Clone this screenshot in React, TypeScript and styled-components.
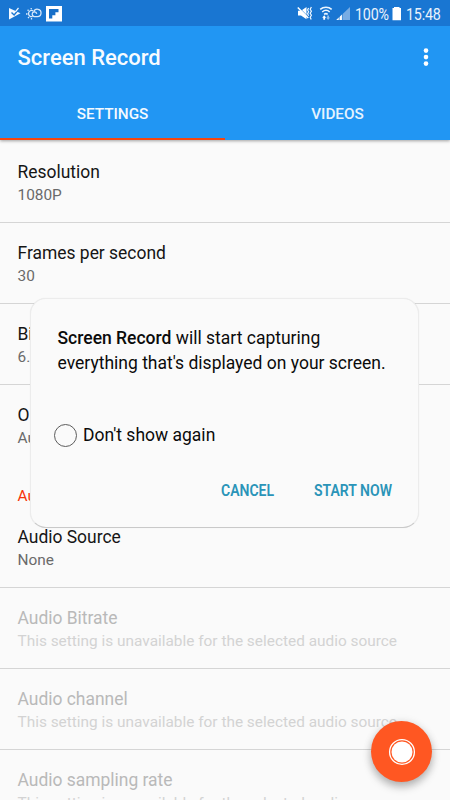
import React from "react";
import styled, { createGlobalStyle } from "styled-components";

const GlobalStyle = createGlobalStyle`
  * { box-sizing: border-box; }
  body {
    margin: 0;
    background: #fafafa;
    font-family: Roboto, "Liberation Sans", sans-serif;
  }
  button { border: 0; padding: 0; background: none; font-family: inherit; }
`;

const Screen = styled.div`
  position: relative;
  width: 450px;
  height: 800px;
  overflow: hidden;
  background: #fafafa;
`;

const Header = styled.header`
  position: relative;
  height: 140px;
  background: #2196f3;
  box-shadow: 0 1px 3px rgba(0, 0, 0, 0.36);
`;

const StatusBar = styled.div`
  display: flex;
  justify-content: space-between;
  height: 26px;
  background: #1976d2;
  color: #e9f2fc;
`;

const StatusGroup = styled.div`
  display: flex;
  align-items: center;
`;

const StatusText = styled.span<{ $width: number }>`
  width: ${(p) => p.$width}px;
  height: 26px;
  font-size: 16.4px;
  line-height: 29px;
  letter-spacing: -0.2px;
  white-space: nowrap;
`;

const Condensed = styled.span<{ $scale: number }>`
  display: inline-block;
  transform: scaleX(${(p) => p.$scale});
  transform-origin: left;
`;

const Toolbar = styled.div`
  display: flex;
  align-items: center;
  justify-content: space-between;
  height: 63px;
  padding: 0 20px 0 17.5px;
`;

const AppTitle = styled.h1`
  margin: 0;
  color: #f7fbff;
  font-size: 22px;
  font-weight: 500;
  line-height: 31px;
`;

const MenuButton = styled.button`
  width: 8px;
  height: 24px;
  display: flex;
`;

const Tabs = styled.nav`
  display: grid;
  grid-template-columns: 1fr 1fr;
  height: 51px;
`;

const Tab = styled.button<{ $active?: boolean }>`
  padding-top: 1px;
  border-bottom: 2px solid ${(p) => (p.$active ? "#f4460f" : "transparent")};
  color: ${(p) => (p.$active ? "#f4faff" : "#e6f3fe")};
  font-size: 15.3px;
  font-weight: 500;
`;

const SettingsList = styled.main`
  padding-top: 1.5px;
`;

const Row = styled.section<{ $disabled?: boolean; $divider?: boolean }>`
  height: 81.2px;
  padding: 19.4px 17.5px 0;
  border-bottom: 1px solid ${(p) => (p.$divider ? "#d5d5d5" : "transparent")};
  color: ${(p) => (p.$disabled ? "#b9b9b9" : "#151515")};
`;

const RowTitle = styled.div`
  font-size: 17.45px;
  line-height: 23px;
  white-space: nowrap;
`;

const RowSummary = styled.div<{ $disabled?: boolean }>`
  color: ${(p) => (p.$disabled ? "#d3d3d3" : "#6a6a6a")};
  font-size: 15.4px;
  line-height: 22px;
  white-space: nowrap;
`;

const Category = styled.div`
  height: 40.2px;
  padding: 19px 17.5px 0;
  color: #f73208;
  font-size: 15.4px;
  line-height: 22px;
`;

const Dialog = styled.div`
  position: absolute;
  top: 298px;
  left: 30px;
  width: 389px;
  height: 230px;
  padding: 27px 26px 0 26.5px;
  border: 1px solid #ececec;
  border-bottom-color: #c9c9c9;
  border-radius: 16px;
  background: #fafafa;
  box-shadow: 0 0 1px rgba(0, 0, 0, 0.1);
  color: #0b0b0b;
`;

const Message = styled.p`
  margin: 0;
  font-size: 17.5px;
  line-height: 25px;
  white-space: nowrap;

  strong { font-weight: 500; }
`;

const Choice = styled.label`
  display: flex;
  align-items: center;
  gap: 6px;
  height: 24px;
  margin: 47px 0 0 -3.5px;
  font-size: 17.5px;
  line-height: 26px;
`;

const Radio = styled.span`
  width: 23px;
  height: 23px;
  border: 1.5px solid #5c5c5c;
  border-radius: 50%;
`;

const Actions = styled.div`
  display: flex;
  gap: 39px;
  margin: 31px 0 0 163.5px;
`;

const Action = styled.button<{ $width: number }>`
  width: ${(p) => p.$width}px;
  height: 24px;
  color: #2a94b8;
  font-size: 16.5px;
  font-weight: 600;
  text-align: left;
  white-space: nowrap;
`;

const RecordButton = styled.button`
  position: absolute;
  left: 371px;
  top: 721px;
  display: grid;
  place-items: center;
  width: 61px;
  height: 61px;
  border-radius: 50%;
  background: #ff5722;
  box-shadow: 0 5px 8px rgba(0, 0, 0, 0.25), 0 1px 10px rgba(0, 0, 0, 0.1);
`;

type Setting = { title: string; summary: string; disabled?: boolean; divider?: boolean };

const unavailable = "This setting is unavailable for the selected audio source";

const general: Setting[] = [
  { title: "Resolution", summary: "1080P", divider: true },
  { title: "Frames per second", summary: "30", divider: true },
  { title: "Bitrate", summary: "6.0 Mbps", divider: true },
  { title: "Orientation", summary: "Auto" },
];

const audio: Setting[] = [
  { title: "Audio Source", summary: "None", divider: true },
  { title: "Audio Bitrate", summary: unavailable, disabled: true, divider: true },
  { title: "Audio channel", summary: unavailable, disabled: true, divider: true },
  { title: "Audio sampling rate", summary: unavailable, disabled: true },
];

const SettingRow = ({ title, summary, disabled, divider }: Setting) => (
  <Row $disabled={disabled} $divider={divider}>
    <RowTitle>{title}</RowTitle>
    <RowSummary $disabled={disabled}>{summary}</RowSummary>
  </Row>
);

const NotificationIcons = () => (
  <svg width="64" height="26" viewBox="0 0 64 26" fill="none">
    <path d="M9 8 20.5 13.2 9 19.5z" fill="#f4f9ff" />
    <path d="m11.5 12.6 2.6 2.4 5.6-6.6" stroke="#1976d2" strokeWidth="1.4" />
    <path d="m15.5 11.6 3-3.6" stroke="#f4f9ff" strokeWidth="1.2" />
    <g stroke="#d8e9fb" strokeWidth="1.3">
      <path d="M33.2 10.9a3.1 3.1 0 1 0-.6 5.6M31.2 8v1.2M27.6 9.7l1 1M26 14h1.5M28 18l1-1M31.5 18v1.5" />
      <path d="M34.2 16.6h3.2a3.7 3.7 0 1 0-3.6-4.8 2.5 2.5 0 0 0 .4 4.8zM33.8 12c1.5-.2 2.6.5 3 1.8" />
    </g>
    <path d="M46 6h16v15.5H46z" fill="#fff" />
    <path d="M49 9h9.5v3.2h-3.1v3h-3.1v3.2H49z" fill="#176fc8" />
  </svg>
);

const ConnectionIcons = () => (
  <svg width="59" height="26" viewBox="0 0 59 26" fill="none">
    <path d="M2 10.8h3L10.5 7v12.2L5 15.6H2z" fill="#fff" />
    <path d="m2.2 6.8 10 10" stroke="#1976d2" strokeWidth="1" />
    <path d="m1.8 7.5 10.5 10.5" stroke="#fff" strokeWidth="1.5" />
    <path d="m12.6 8-1 2 1 1.7-1 2 1 2M15.4 7l-1.2 2.2 1.2 2-1.2 2 1.2 2-1.2 2 1 2.3" stroke="#f2f8ff" strokeWidth="1.2" />
    <g stroke="#edf6ff" strokeWidth="1.5">
      <path d="M24.2 9.4c3.3-3 8.3-3 11.5 0M26.2 12c2.3-2 5.3-2 7.5 0M28.1 14.3c1.2-.9 2.4-.9 3.6 0" />
    </g>
    <path d="m28.2 15.2 2 2.5h-1.1v2h-1.8v-2h-1.1z" fill="#fff" />
    <path d="M31.2 15.5H33v2h1.1l-2 2.5-2-2.5h1.1z" fill="#8fbdec" />
    <path d="M40.3 20 54 7v13z" fill="#78ace4" />
    <path d="m40.3 20 6-5.7V20z" fill="#fff" />
    <path d="M43.2 16v4M46.4 13.5V20" stroke="#1976d2" strokeWidth=".7" />
  </svg>
);

export default function App() {
  return (
    <Screen>
      <GlobalStyle />
      <Header>
        <StatusBar>
          <StatusGroup><NotificationIcons /></StatusGroup>
          <StatusGroup>
            <ConnectionIcons />
            <StatusText $width={37}><Condensed $scale={0.87}>100%</Condensed></StatusText>
            <svg width="14" height="26" viewBox="0 0 14 26">
              <path d="M.5 8H2V7h5.5v1H9v12.3H.5z" fill="#fff" />
            </svg>
            <StatusText $width={44}><Condensed $scale={0.87}>15:48</Condensed></StatusText>
          </StatusGroup>
        </StatusBar>
        <Toolbar>
          <AppTitle>Screen Record</AppTitle>
          <MenuButton aria-label="More options">
            <svg width="8" height="24" fill="#fff">
              <circle cx="4" cy="4.6" r="2.3" />
              <circle cx="4" cy="11.1" r="2.3" />
              <circle cx="4" cy="17.6" r="2.3" />
            </svg>
          </MenuButton>
        </Toolbar>
        <Tabs>
          <Tab $active>SETTINGS</Tab>
          <Tab>VIDEOS</Tab>
        </Tabs>
      </Header>
      <SettingsList>
        {general.map((item) => <SettingRow key={item.title} {...item} />)}
        <Category>Audio</Category>
        {audio.map((item) => <SettingRow key={item.title} {...item} />)}
      </SettingsList>
      <Dialog role="dialog">
        <Message>
          <strong>Screen Record</strong> will start capturing<br />
          everything that's displayed on your screen.
        </Message>
        <Choice><Radio />Don't show again</Choice>
        <Actions>
          <Action $width={54}><Condensed $scale={0.85}>CANCEL</Condensed></Action>
          <Action $width={80}><Condensed $scale={0.85}>START NOW</Condensed></Action>
        </Actions>
      </Dialog>
      <RecordButton aria-label="Record">
        <svg width="28" height="28">
          <circle cx="14" cy="14" r="12.4" fill="none" stroke="#fff" strokeWidth="1.3" />
          <circle cx="14" cy="14" r="10.5" fill="#fff" />
        </svg>
      </RecordButton>
    </Screen>
  );
}
